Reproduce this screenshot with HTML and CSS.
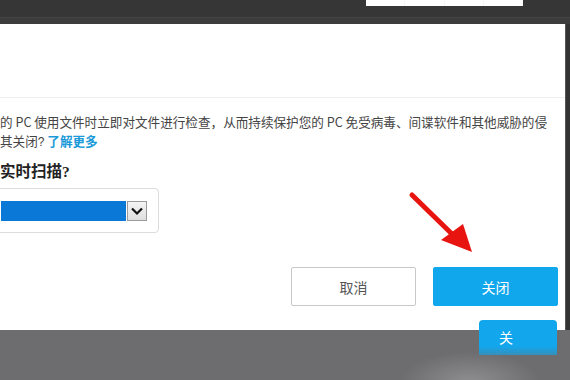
FILE: index.html
```html
<!DOCTYPE html>
<html lang="zh-CN">
<head>
<meta charset="utf-8">
<link rel="stylesheet" href="styles.css">
</head>
<body>
<div class="top"><div class="tab"><span></span><span></span><span></span><span></span></div></div>
<div class="band"></div>
<div class="main">
  <div class="panel">
    <div class="head"></div>
    <div class="body">
      <div class="desc">
        <div class="line">的 PC 使用文件时立即对文件进行检查，从而持续保护您的 PC 免受病毒、间谍软件和其他威胁的侵</div>
        <div class="line">其关闭<span class="q">?</span> <a class="link">了解更多</a></div>
      </div>
      <h2 class="title">实时扫描<span class="q2">?</span></h2>
      <div class="select">
        <div class="sel-value"></div>
        <div class="sel-arrow">
          <svg width="14" height="10" viewBox="0 0 14 10"><path d="M2 2.5 L7 7.5 L12 2.5" fill="none" stroke="#111" stroke-width="2.2"/></svg>
        </div>
      </div>
      <div class="actions">
        <button class="btn cancel">取消</button>
        <button class="btn primary">关闭</button>
      </div>
    </div>
  </div>
  <div class="edge"></div>
</div>
<div class="bottom"></div>
<div class="ghost">关</div>
<svg class="arrow" width="570" height="380" viewBox="0 0 570 380">
  <line x1="412" y1="195" x2="452" y2="234" stroke="#e8140f" stroke-width="5" stroke-linecap="round"/>
  <polygon points="441,240 463,224 472,252" fill="#e8140f"/>
</svg>
</body>
</html>
```
FILE: styles.css
```css
html, body {
  margin: 0;
  padding: 0;
}
body {
  width: 570px;
  height: 380px;
  overflow: hidden;
  background: #6d6d6f;
  font-family: "Noto Sans CJK SC", "Noto Sans", sans-serif;
  position: relative;
}
.top {
  height: 17px;
  background: #363636;
  display: flex;
}
.tab {
  margin-left: 366px;
  width: 157px;
  height: 6px;
  background: #fff;
  display: flex;
}
.tab span {
  flex: 1;
  border-right: 1px solid #f6f6f6;
}
.band {
  height: 7px;
  background: #3c3c3c;
  border-top: 1px solid #444;
  box-sizing: border-box;
}
.main {
  display: flex;
  height: 306px;
}
.panel {
  flex: 1;
  background: #fff;
  display: flex;
  flex-direction: column;
  overflow: hidden;
}
.edge {
  width: 5px;
  background: #333;
  border-left: 1px solid #555;
  box-sizing: border-box;
}
.head {
  height: 73px;
  border-bottom: 1px solid #efefef;
}
.body {
  display: flex;
  flex-direction: column;
}
.desc {
  margin-top: 14px;
  font-size: 12.6px;
  line-height: 19px;
  color: #444;
  white-space: nowrap;
}
.q {
  font-family: "Liberation Sans", sans-serif;
  font-size: 12px;
}
.link {
  color: #1a9ad8;
  font-weight: bold;
}
.title {
  margin: 8px 0 0 0;
  font-size: 15.5px;
  line-height: 20px;
  font-weight: bold;
  color: #222;
}
.q2 {
  font-family: "Liberation Serif", serif;
}
.select {
  margin: 6px 0 0 -20px;
  width: 179px;
  height: 45px;
  box-sizing: border-box;
  border: 1px solid #dcdcdc;
  border-radius: 4px;
  display: flex;
  align-items: center;
  padding: 0 11px 0 20px;
}
.sel-value {
  width: 127px;
  height: 20px;
  background: #0a78d6;
}
.sel-arrow {
  margin-left: 1px;
  width: 20px;
  height: 20px;
  box-sizing: border-box;
  border: 1px solid #9a9a9a;
  background: linear-gradient(#f4f4f4, #dedede);
  display: flex;
  align-items: center;
  justify-content: center;
}
.actions {
  margin-top: 34px;
  display: flex;
  justify-content: flex-end;
  gap: 17px;
  padding-right: 7px;
}
.btn {
  width: 125px;
  height: 39px;
  font-family: "Noto Sans CJK SC", sans-serif;
  font-size: 14px;
  border-radius: 2px;
  box-sizing: border-box;
}
.cancel {
  background: #fff;
  border: 1px solid #c9c9c9;
  color: #555;
}
.primary {
  background: #10a7ec;
  border: 1px solid #10a7ec;
  color: #fff;
}
.bottom {
  height: 50px;
  background: radial-gradient(ellipse 70px 30px at 470px 52px, #8e8e90, #6d6d6f);
}
.ghost {
  position: absolute;
  left: 479px;
  top: 320px;
  width: 78px;
  height: 35px;
  background: linear-gradient(#12a6ec 75%, rgba(18,166,236,0.6));
  border-radius: 4px 4px 0 0;
  color: #fff;
  font-size: 14px;
  line-height: 35px;
  text-indent: 20px;
}
.arrow {
  position: absolute;
  left: 0;
  top: 0;
  pointer-events: none;
}
```
